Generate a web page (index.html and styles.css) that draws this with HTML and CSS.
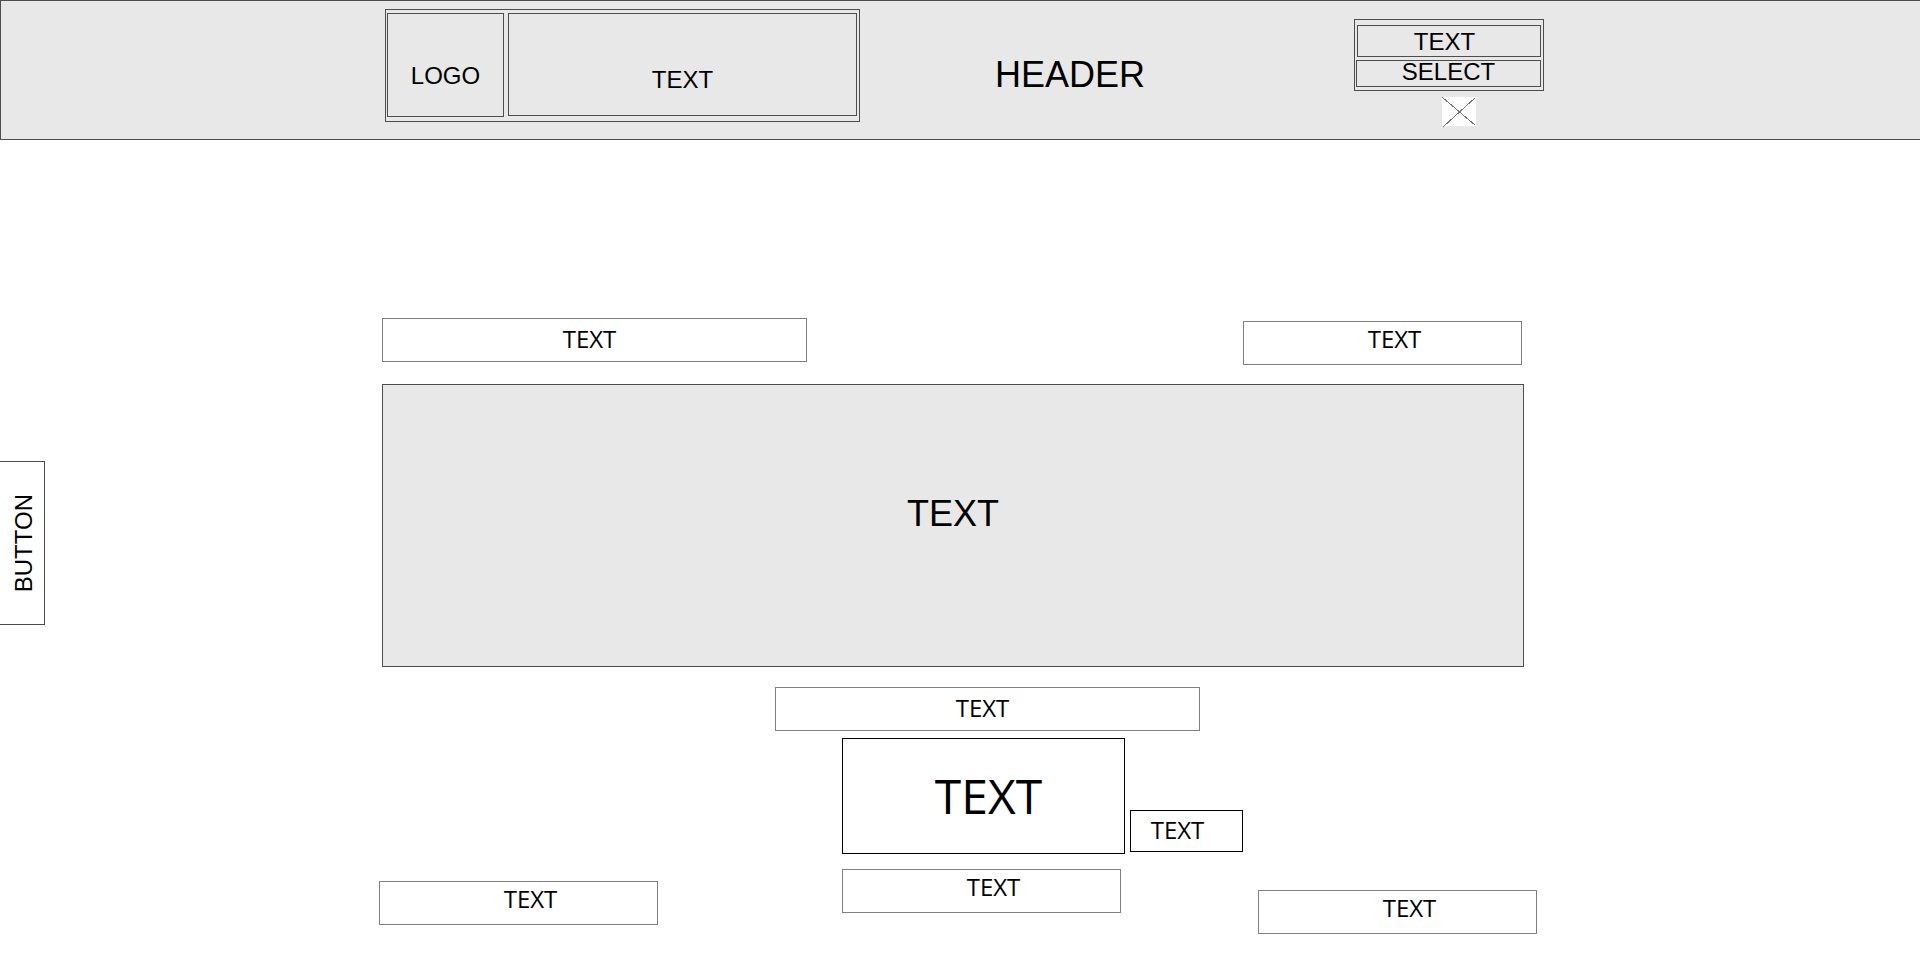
FILE: index.html
```
<!DOCTYPE html>
<html lang="en">
<head>
<meta charset="utf-8">
<meta name="viewport" content="width=device-width, initial-scale=1">
<title>Wireframe</title>
<link rel="stylesheet" href="styles.css">
</head>
<body>
<header class="header">
  <div class="header-inner">
    <div class="brand">
      <div class="brand-logo">LOGO</div>
      <div class="brand-text">TEXT</div>
    </div>
    <h1 class="title">HEADER</h1>
    <div class="tools">
      <div class="tools-box">
        <label class="tools-label" for="choice">TEXT</label>
        <select class="tools-select" id="choice"><option>SELECT</option></select>
      </div>
      <svg class="placeholder" viewBox="0 0 34 30" aria-hidden="true">
        <rect width="34" height="29" fill="#fff"/>
        <path d="M0.5 0.5L33.5 28.5M33.5 0.5L1.5 29.5" fill="none" stroke="#777" stroke-width="1" shape-rendering="crispEdges"/>
      </svg>
    </div>
  </div>
</header>
<button class="side-button" type="button">BUTTON</button>
<main class="main">
  <div class="top-row">
    <div class="box box-wide">TEXT</div>
    <div class="box box-narrow">TEXT</div>
  </div>
  <section class="panel">TEXT</section>
  <div class="bottom-row">
    <div class="box box-narrow box-left">TEXT</div>
    <div class="center">
      <div class="box box-wide">TEXT</div>
      <div class="feature-row">
        <div class="box feature">TEXT</div>
        <div class="box feature-note">TEXT</div>
      </div>
      <div class="box box-narrow box-center">TEXT</div>
    </div>
    <div class="box box-narrow box-right">TEXT</div>
  </div>
</main>
</body>
</html>
```
FILE: styles.css
```
* {
  box-sizing: border-box;
}

body {
  margin: 0;
  background: #fff;
  color: #000;
  font-family: "Liberation Sans", Arial, sans-serif;
  font-size: 24px;
  line-height: 24px;
}

/* Header */
.header {
  padding: 8px 0 12px 8px;
  border: 1px solid #4d4d4d;
  border-right: 0;
  background: #e8e8e8;
}

.header-inner {
  display: flex;
  align-items: flex-start;
  max-width: 1159px;
  margin: 0 auto;
}

.brand {
  display: flex;
  flex: 0 1 475px;
  gap: 4px;
  min-height: 113px;
  padding: 3px 2px 4px 1px;
  border: 1px solid #4d4d4d;
}

.brand-logo,
.brand-text {
  display: flex;
  align-items: center;
  justify-content: center;
  border: 1px solid #4d4d4d;
}

.brand-logo {
  flex: 0 1 117px;
  padding-top: 22px;
}

.brand-text {
  flex: 1;
  margin-bottom: 1px;
  padding-top: 30px;
}

.title {
  flex: 1;
  margin: 46px 0 0 135px;
  font-size: 36px;
  font-weight: 400;
  line-height: 40px;
}

.tools {
  display: flex;
  flex: 0 0 190px;
  flex-direction: column;
  align-items: center;
  gap: 6px;
  margin-top: 10px;
}

.tools-box {
  display: flex;
  flex-direction: column;
  gap: 3px;
  width: 100%;
  padding: 5px 2px 3px 1px;
  border: 1px solid #4d4d4d;
}

.tools-label,
.tools-select {
  border: 1px solid #4d4d4d;
  text-align: center;
}

.tools-label {
  margin-left: 1px;
  padding: 4px 9px 2px 0;
}

.tools-select {
  width: 100%;
  height: 27px;
  margin: 0;
  padding: 0 0 4px;
  border-radius: 0;
  background: transparent;
  color: inherit;
  font: inherit;
  line-height: 21px;
  text-align-last: center;
  appearance: none;
}

.placeholder {
  width: 34px;
  height: 30px;
  margin-left: 20px;
}

/* Tab fixed to the left edge of the window */
.side-button {
  position: fixed;
  top: 461px;
  left: 0;
  width: 45px;
  height: 164px;
  padding: 0 6px 0 10px;
  border: 1px solid #4d4d4d;
  border-left: 0;
  background: #fff;
  color: inherit;
  font: inherit;
  writing-mode: sideways-lr;
}

/* Content */
.main {
  max-width: 1162px;
  margin: 0 auto;
  padding: 178px 4px 38px 0;
}

.box {
  display: flex;
  align-items: center;
  justify-content: center;
  min-height: 44px;
  border: 1px solid #7f7f7f;
  font-family: "Open Sans", "Noto Sans", sans-serif;
}

.box-wide {
  flex: 0 1 425px;
  max-width: 425px;
  padding: 0 10px 2px 0;
}

.box-narrow {
  flex: 0 1 279px;
  max-width: 279px;
  padding: 0 0 8px 24px;
}

.top-row {
  display: flex;
  justify-content: space-between;
  margin: 0 15px 19px 3px;
}

.top-row .box-wide {
  margin-bottom: 3px;
}

.top-row .box-narrow {
  margin-top: 3px;
}

.panel {
  display: flex;
  align-items: center;
  justify-content: center;
  min-height: 283px;
  margin: 0 13px 20px 3px;
  padding-bottom: 24px;
  border: 1px solid #4d4d4d;
  background: #e8e8e8;
  font-size: 36px;
  line-height: 40px;
}

.bottom-row {
  display: flex;
  align-items: flex-end;
}

.box-left {
  margin-bottom: 9px;
}

.center {
  flex: 0 1 468px;
  margin: 0 15px 21px auto;
}

.feature-row {
  display: flex;
  align-items: flex-end;
  gap: 5px;
  margin: 7px 0 15px 67px;
}

.feature {
  flex: 0 1 283px;
  min-height: 116px;
  padding-left: 10px;
  border-color: #000;
  font-size: 48px;
  line-height: 56px;
}

.feature-note {
  flex: 0 1 113px;
  min-height: 42px;
  margin-bottom: 2px;
  padding: 0 18px 2px 0;
  border-color: #000;
}

.box-center {
  margin-left: 67px;
}
```
